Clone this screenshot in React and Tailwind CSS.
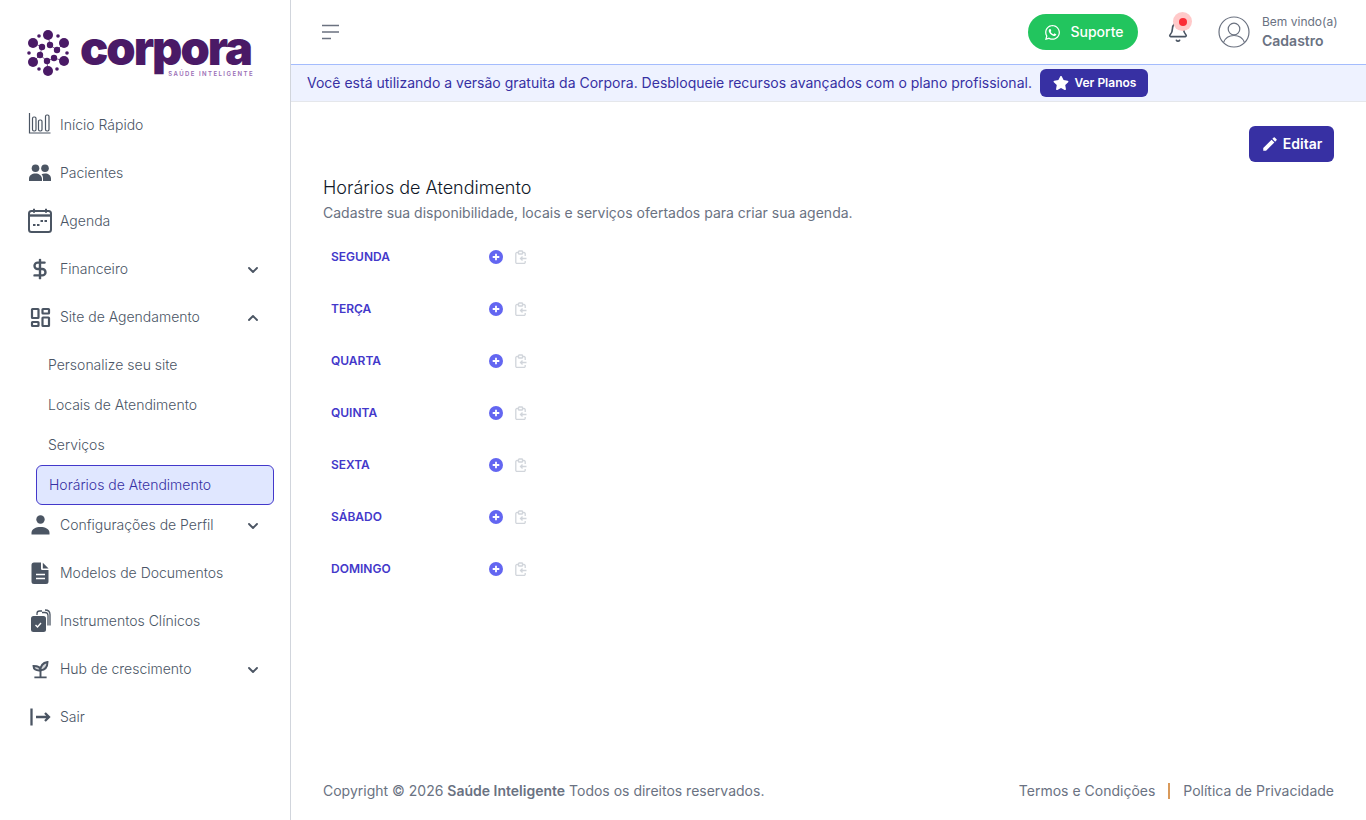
import { ChevronDown, ChevronUp, Bell, DollarSign } from "lucide-react";
import { FaWhatsapp, FaStar } from "react-icons/fa";
import { MdEdit } from "react-icons/md";

const Logo = () => (
  <div className="flex items-start">
    <svg width="44" height="48" viewBox="0 0 44 48" className="shrink-0 text-[#4a1a66]" fill="currentColor">
      <g stroke="currentColor" strokeWidth="0.7">
        <path d="M21 5 23 15 M6 13 15 17 M37 13 30 20 M6 32 13 25 M37 31 27 28 M21 41 20 31 M13 25 20 31 M23 15 30 20 M27 28 20 31 M15 17 13 25" />
      </g>
      <circle cx="21" cy="5" r="5" />
      <circle cx="6" cy="13" r="5" />
      <circle cx="37" cy="13" r="5" />
      <circle cx="6" cy="32" r="5" />
      <circle cx="37" cy="31" r="5" />
      <circle cx="21" cy="41" r="5" />
      <circle cx="15" cy="17" r="3.2" />
      <circle cx="23" cy="15" r="3.2" />
      <circle cx="30" cy="20" r="3.2" />
      <circle cx="13" cy="25" r="3.2" />
      <circle cx="20" cy="31" r="3.2" />
      <circle cx="27" cy="28" r="3.2" />
      <circle cx="12" cy="6" r="1.8" />
      <circle cx="31" cy="6" r="1.8" />
      <circle cx="2" cy="23" r="1.8" />
      <circle cx="40" cy="23" r="1.8" />
      <circle cx="12" cy="39" r="1.8" />
      <circle cx="30" cy="39" r="1.8" />
    </svg>
    <div className="relative ml-[9px] h-[52px] w-[174px]">
      <span className="absolute left-0 top-[-17px] font-['Inter',sans-serif] text-[47px] leading-[70px] font-black tracking-[-2px] text-[#4a1a66]">corpora</span>
      <span className="absolute right-0 top-[39px] font-['Inter',sans-serif] text-[6px] leading-[9px] font-semibold tracking-[1.45px] whitespace-nowrap text-[#9a6db5]">SAÚDE INTELIGENTE</span>
    </div>
  </div>
);

const ChartIcon = () => (
  <svg width="24" height="24" viewBox="0 0 24 24" fill="none" stroke="#4b5563" strokeWidth="1.2">
    <path d="M1.500 0v20h21" />
    <rect x="4.500" y="4" width="3.500" height="14" rx="1.400" />
    <rect x="10.500" y="7" width="3.500" height="11" rx="1.400" />
    <rect x="17.500" y="2" width="3.500" height="16" rx="1.400" />
  </svg>
);

const PeopleIcon = () => (
  <svg width="24" height="24" viewBox="0 0 24 24" fill="#4b5563">
    <circle cx="7.500" cy="7.200" r="3.800" />
    <circle cx="17" cy="7.200" r="3.800" />
    <path d="M1 20v-2.500C1 14.500 4 12.500 7.500 12.500s6 2 6.500 5V20z" />
    <path d="M15 20v-3c0-1.500-.5-2.800-1.500-3.800 1-.5 2.200-.7 3.500-.7 3.500 0 6 2 6 5v2.500z" />
  </svg>
);

const CalendarIcon = () => (
  <svg width="24" height="26" viewBox="0 0 24 26" fill="none" stroke="#4b5563" strokeWidth="2">
    <rect x="1" y="3" width="22" height="21" rx="2.500" />
    <path d="M1 7.500h22" strokeWidth="2.400" />
    <path d="M6 .8v4M18 .8v4" />
    <g fill="#4b5563" stroke="none">
      <rect x="5" y="16" width="2.500" height="2" />
      <rect x="9" y="16" width="2.500" height="2" />
      <rect x="12.500" y="12" width="2.500" height="2" />
      <rect x="16.500" y="12" width="2.500" height="2" />
    </g>
  </svg>
);

const GridIcon = () => (
  <svg width="24" height="24" viewBox="0 0 24 24" fill="none" stroke="#4b5563" strokeWidth="2.200">
    <rect x="4" y="4" width="6.500" height="9" rx="0.500" />
    <rect x="14.500" y="4" width="6.500" height="4.500" rx="0.500" />
    <rect x="4" y="17" width="6.500" height="4" rx="0.500" />
    <rect x="14.500" y="12.500" width="6.500" height="8.500" rx="0.500" />
  </svg>
);

const PersonIcon = () => (
  <svg width="24" height="24" viewBox="0 0 24 24" fill="#4b5563">
    <circle cx="12.500" cy="6.500" r="4.200" />
    <path d="M3.500 21.500v-1.800c0-3.700 4.500-5.700 9-5.700s9 2 9 5.700v1.800z" />
  </svg>
);

const DocIcon = () => (
  <svg width="24" height="24" viewBox="0 0 24 24" fill="#4b5563">
    <path d="M6 1.500h7v6c0 1 .8 1.500 1.500 1.500h6v11.500a2.500 2.500 0 0 1-2.500 2.500H6a2.500 2.500 0 0 1-2.500-2.500V4A2.500 2.500 0 0 1 6 1.500z" />
    <path d="M14.800 1.800l5.800 5.700h-5.800z" />
    <path d="M8 13.500h9M8 17.500h9" stroke="#fff" strokeWidth="1.500" />
  </svg>
);

const ClinicalIcon = () => (
  <svg width="24" height="24" viewBox="0 0 24 24">
    <path d="M9 6V4.500A2.500 2.500 0 0 1 11.500 2h2.500M14 3.500h3a3 3 0 0 1 3 3v10M17 1c3 0 5 1.500 5 4.500v11" fill="none" stroke="#4b5563" strokeWidth="1.300" />
    <rect x="3" y="7" width="15" height="16" rx="2.500" fill="#4b5563" />
    <path d="M7.500 16l2 2 3.500-4" fill="none" stroke="#fff" strokeWidth="1.400" />
  </svg>
);

const SproutIcon = () => (
  <svg width="21" height="21" viewBox="0 0 24 24" fill="none" stroke="#4b5563" strokeWidth="2.200">
    <path d="M5 21h14M12 21v-8" />
    <path d="M12 13c0-3-2.500-5-8-5 0 3.500 2.500 5.500 8 5z" fill="#4b5563" fillOpacity="0.25" />
    <path d="M12 13c0-5 2.500-8.500 8-9.500 0 5.500-2.500 9-8 9.500z" fill="#4b5563" fillOpacity="0.25" />
  </svg>
);

const LogoutIcon = () => (
  <svg width="24" height="24" viewBox="0 0 24 24" fill="none" stroke="#4b5563" strokeWidth="2.300">
    <path d="M3.500 3.500v17" />
    <path d="M8 12h13M17 8l4 4-4 4" />
  </svg>
);

const MenuIcon = () => (
  <svg width="18" height="16" viewBox="0 0 18 16" fill="none" stroke="#6b7280" strokeWidth="1.700">
    <path d="M0 1.500h17M0 8h17M0 14.500h9" />
  </svg>
);

const UserCircle = () => (
  <svg width="32" height="32" viewBox="0 0 32 32" fill="none" stroke="#6b7280" strokeWidth="1.200">
    <circle cx="16" cy="16" r="15" />
    <circle cx="16" cy="13" r="5.800" />
    <path d="M5.500 26.500c1.500-4 5.500-7 10.500-7s9 3 10.500 7" />
  </svg>
);

const PlusCircle = () => (
  <svg width="14" height="14" viewBox="0 0 14 14">
    <circle cx="7" cy="7" r="7" fill="#6366f1" />
    <path d="M7 3.700v6.600M3.700 7h6.600" stroke="#fff" strokeWidth="1.800" />
  </svg>
);

const CopyIcon = () => (
  <svg width="12" height="14" viewBox="0 0 12 14" fill="none" stroke="#d1d5db" strokeWidth="1.300" className="ml-[12px]">
    <path d="M3.500 2.500H2a1.200 1.200 0 0 0-1.200 1.200v8.600A1.200 1.200 0 0 0 2 13.500h7a1.200 1.200 0 0 0 1.200-1.200V11M10.200 6V3.700A1.200 1.200 0 0 0 9 2.500H7.500" />
    <rect x="3.500" y="1" width="4" height="3" rx="0.600" />
    <path d="M11.500 8.500H5.500M7.500 6.500l-2 2 2 2" />
  </svg>
);

const navTop = [
  { label: "Início Rápido", icon: <ChartIcon /> },
  { label: "Pacientes", icon: <PeopleIcon /> },
  { label: "Agenda", icon: <CalendarIcon /> },
  { label: "Financeiro", icon: <DollarSign size={22} strokeWidth={2.6} color="#4b5563" />, arrow: "down" },
  { label: "Site de Agendamento", icon: <GridIcon />, arrow: "up" },
];

const navBottom = [
  { label: "Configurações de Perfil", icon: <PersonIcon />, arrow: "down" },
  { label: "Modelos de Documentos", icon: <DocIcon /> },
  { label: "Instrumentos Clínicos", icon: <ClinicalIcon /> },
  { label: "Hub de crescimento", icon: <SproutIcon />, arrow: "down" },
  { label: "Sair", icon: <LogoutIcon /> },
];

const days = ["SEGUNDA", "TERÇA", "QUARTA", "QUINTA", "SEXTA", "SÁBADO", "DOMINGO"];

const NavItem = ({ item }) => (
  <div className="flex h-12 items-center pl-7 pr-[29px]">
    <span className="flex w-6 justify-center">{item.icon}</span>
    <span className="ml-2 flex-1 text-sm font-light text-gray-600">{item.label}</span>
    {item.arrow === "down" && <ChevronDown size={16} strokeWidth={2.8} color="#4b5563" className="mt-0.5" />}
    {item.arrow === "up" && <ChevronUp size={16} strokeWidth={2.8} color="#4b5563" className="mt-0.5" />}
  </div>
);

const Sidebar = () => (
  <aside className="flex w-[291px] shrink-0 flex-col border-r border-gray-300 bg-white">
    <div className="h-[101px] pl-[27px] pt-[30px]">
      <Logo />
    </div>
    {navTop.map((item) => (
      <NavItem key={item.label} item={item} />
    ))}
    <div className="mt-1 -mb-1 flex flex-col pl-9 pr-4">
      <div className="flex h-10 items-center pl-3 text-sm font-light text-gray-600">Personalize seu site</div>
      <div className="flex h-10 items-center pl-3 text-sm font-light text-gray-600">Locais de Atendimento</div>
      <div className="flex h-10 items-center pl-3 text-sm font-light text-gray-600">Serviços</div>
      <div className="flex h-10 items-center rounded-md border border-[#4338ca] bg-[#e0e7ff] pl-3 text-sm font-light text-[#3730a3]">Horários de Atendimento</div>
    </div>
    {navBottom.map((item) => (
      <NavItem key={item.label} item={item} />
    ))}
  </aside>
);

const Header = () => (
  <header className="flex h-16 shrink-0 items-center justify-between pl-[31px] pr-[28px]">
    <MenuIcon />
    <div className="flex items-center">
      <button className="flex h-9 w-[110px] items-center justify-center gap-[9px] rounded-full bg-[#22c55e] pl-0.5 text-sm font-medium text-white">
        <FaWhatsapp size={17} />
        Suporte
      </button>
      <div className="relative ml-[28px] mr-[28px] flex h-6 w-6 items-center justify-center">
        <Bell size={22} strokeWidth={1.8} color="#4b5563" />
        <span className="absolute -right-[2px] -top-[8px] flex h-[19px] w-[19px] items-center justify-center rounded-full bg-red-200">
          <span className="h-2 w-2 rounded-full bg-red-500"></span>
        </span>
      </div>
      <UserCircle />
      <div className="ml-3 flex w-[76px] flex-col pb-0.5">
        <span className="text-xs leading-[20px] text-gray-500">Bem vindo(a)</span>
        <span className="-mt-px text-sm leading-[20px] font-semibold text-gray-500">Cadastro</span>
      </div>
    </div>
  </header>
);

const Banner = () => (
  <div className="flex h-[38px] shrink-0 items-center gap-2 border-t border-b border-t-[#a4bcfd] border-b-gray-200 bg-[#eef2ff] pl-4">
    <span className="text-sm text-[#3730a3]">
      Você está utilizando a versão gratuita da Corpora. Desbloqueie recursos avançados com o plano profissional.
    </span>
    <button className="flex h-7 w-[108px] items-center justify-center gap-[5px] rounded-md bg-[#3730a3] pl-0.5 text-xs font-semibold text-white">
      <FaStar size={16} />
      Ver Planos
    </button>
  </div>
);

export default function App() {
  return (
    <div className="flex min-h-[820px] bg-white font-['Inter',sans-serif]">
      <Sidebar />
      <div className="flex min-w-0 flex-1 flex-col">
        <Header />
        <Banner />
        <main className="flex flex-1 flex-col px-8 pt-6">
          <div className="flex justify-end">
            <button className="flex h-9 w-[85px] items-center justify-center gap-1 rounded-md bg-[#3730a3] text-sm font-semibold text-white">
              <MdEdit size={18} />
              Editar
            </button>
          </div>
          <h2 className="mt-[14px] text-lg leading-6 font-light text-gray-900">Horários de Atendimento</h2>
          <p className="mt-[3px] text-sm leading-5 text-gray-500">Cadastre sua disponibilidade, locais e serviços ofertados para criar sua agenda.</p>
          <div className="mt-5 flex flex-col gap-6">
            {days.map((day) => (
              <div key={day} className="flex h-7 items-center pl-2">
                <span className="w-[158px] text-xs font-semibold text-[#4338ca]">{day}</span>
                <PlusCircle />
                <CopyIcon />
              </div>
            ))}
          </div>
          <footer className="mt-auto flex h-[50px] items-start justify-between pt-[11px] text-sm text-gray-500">
            <span>
              Copyright © 2026 <span className="font-semibold">Saúde Inteligente</span> Todos os direitos reservados.
            </span>
            <div className="flex items-center">
              <span>Termos e Condições</span>
              <span className="mx-[13px] h-4 w-0.5 bg-[#d99a5b]"></span>
              <span>Política de Privacidade</span>
            </div>
          </footer>
        </main>
      </div>
    </div>
  );
}
